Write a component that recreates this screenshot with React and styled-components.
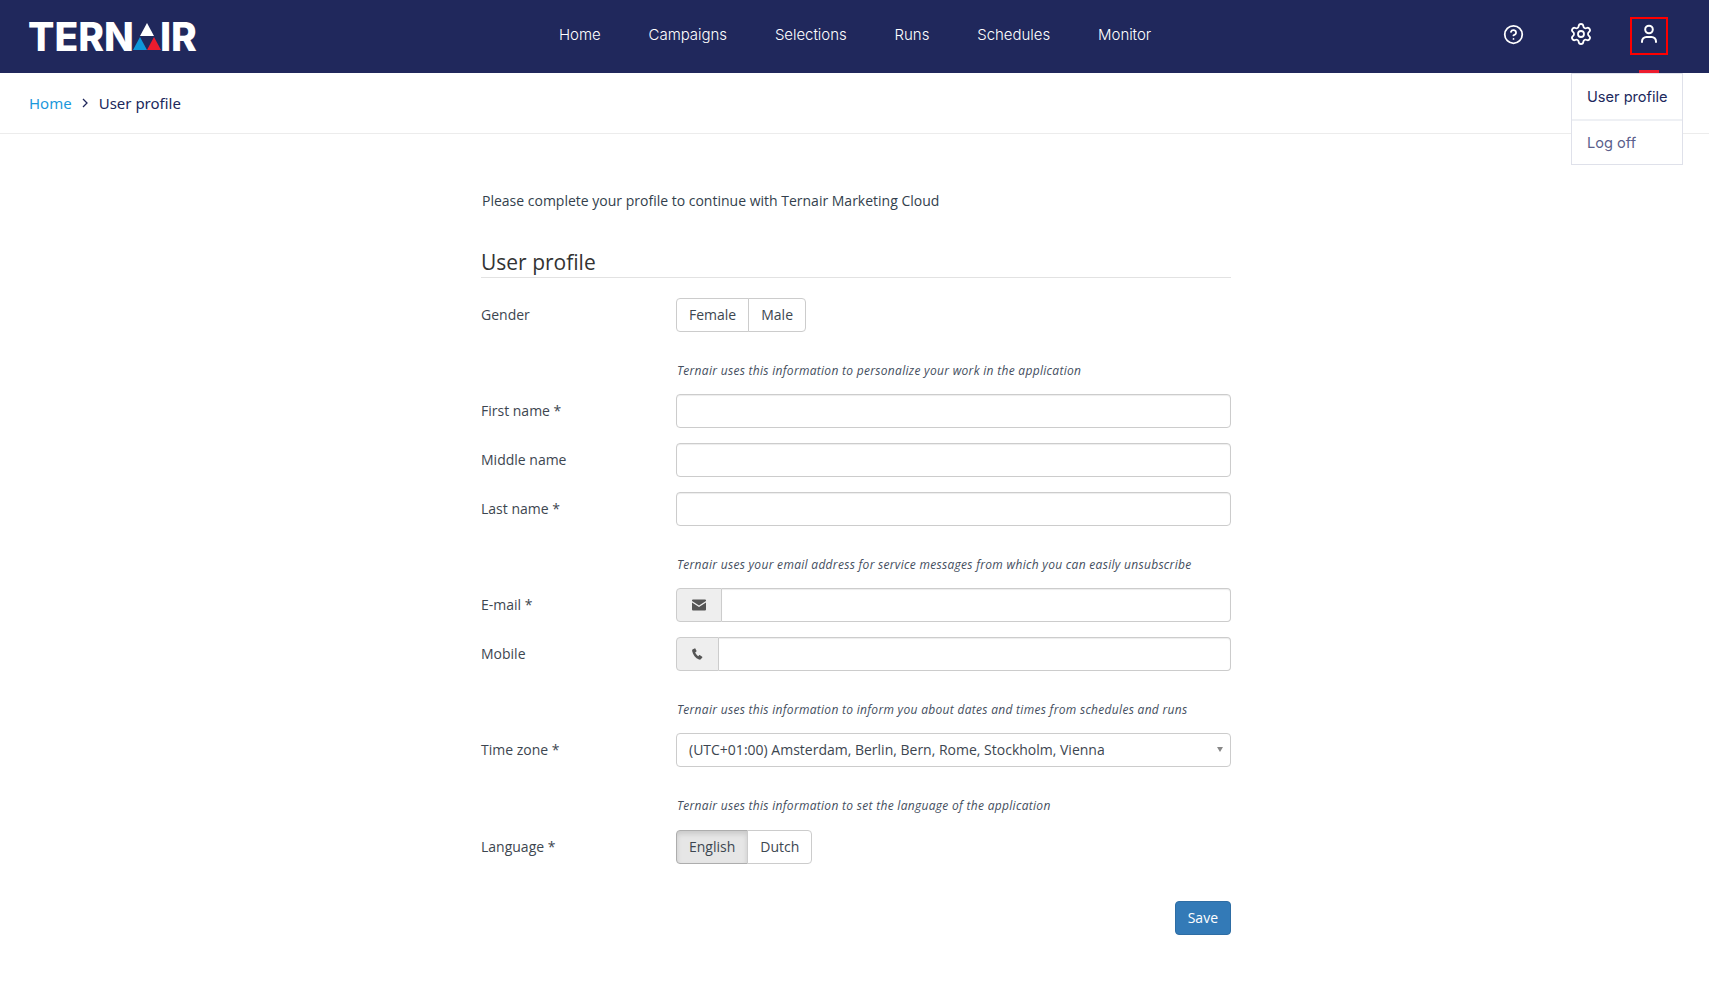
import React from 'react';
import styled, { createGlobalStyle } from 'styled-components';
import { CircleHelp, Settings } from 'lucide-react';

const GlobalStyle = createGlobalStyle`
  html, body {
    margin: 0;
    padding: 0;
    background: #fff;
  }
  body {
    font-family: "Open Sans", "Liberation Sans", sans-serif;
    font-size: 14px;
    color: #333;
  }
  * {
    box-sizing: border-box;
  }
`;

const TopBar = styled.header`
  height: 73px;
  background: #20285c;
  display: flex;
  align-items: center;
  position: relative;
  padding: 0 41px 0 28px;
`;

const Logo = styled.div`
  width: 169px;
  display: flex;
  align-items: center;
  color: #fff;
  font-family: Inter, "Liberation Sans", sans-serif;
  font-weight: 800;
  font-size: 39px;
  line-height: 1;
  user-select: none;
`;

const LogoMark = styled.svg`
  width: 28px;
  height: 28px;
  margin: 0 -1px 0 -1px;
  flex: none;
`;

const Nav = styled.nav`
  display: flex;
  gap: 48px;
  margin-left: 362px;
  margin-top: -5px;
`;

const NavLink = styled.a`
  color: #fff;
  font-family: Inter, "Liberation Sans", sans-serif;
  font-size: 15px;
  font-weight: 300;
  letter-spacing: -0.05px;
  text-decoration: none;
`;

const IconBar = styled.div`
  margin-left: auto;
  display: flex;
  align-items: center;
  gap: 30px;
`;

const IconButton = styled.button`
  width: 38px;
  height: 38px;
  margin-top: -2px;
  padding: 0 0 3px;
  display: flex;
  align-items: center;
  justify-content: center;
  background: none;
  color: #fff;
  border: 2px solid ${(p) => (p.$focused ? '#f00' : 'transparent')};
`;

const ActiveMark = styled.span`
  position: absolute;
  right: 50px;
  bottom: 0;
  width: 20px;
  height: 3px;
  background: #ed1c2e;
`;

const Crumbs = styled.div`
  height: 61px;
  padding: 0 29px;
  display: flex;
  align-items: center;
  gap: 9px;
  border-bottom: 1px solid #ececec;
  font-family: "Noto Sans", "Open Sans", sans-serif;
  font-size: 15px;
  color: #20285c;
`;

const CrumbLink = styled.a`
  color: #1b98dc;
  text-decoration: none;
`;

const CrumbArrow = styled.svg`
  width: 8px;
  height: 10px;
  margin-right: 1px;
  fill: none;
  stroke: #20285c;
  stroke-width: 1.3;
`;

const Menu = styled.div`
  position: absolute;
  top: 73px;
  right: 26px;
  width: 112px;
  background: #fff;
  border: 1px solid #dfe1ea;
  font-family: Inter, "Liberation Sans", sans-serif;
  font-size: 14.6px;
`;

const MenuItem = styled.div`
  height: ${(p) => p.$height}px;
  padding-left: 15px;
  display: flex;
  align-items: center;
  color: ${(p) => (p.$muted ? '#5b5f8c' : '#20285c')};
  border-top: ${(p) => (p.$muted ? '2px solid #eef0f4' : 'none')};
`;

const Main = styled.main`
  width: 750px;
  margin: 0 auto;
  position: relative;
  left: 1.5px;
  padding-top: 57px;
`;

const Intro = styled.p`
  margin: 0 0 0 1px;
  font-size: 14px;
  line-height: 20px;
  color: #333f4d;
`;

const Title = styled.h2`
  margin: 36px 0 20px;
  font-size: 21px;
  font-weight: 400;
  line-height: 30px;
  color: #333;
  border-bottom: 1px solid #e2e2e2;
`;

const Row = styled.div`
  display: grid;
  grid-template-columns: 195px 1fr;
  align-items: center;
  margin-bottom: 15px;
`;

const Label = styled.label`
  padding-bottom: 2px;
  color: #3d4650;
`;

const Help = styled.p`
  margin: 30px 0 ${(p) => p.$bottom || 15}px 196px;
  font-size: 12px;
  line-height: 17px;
  font-style: italic;
  letter-spacing: 0.3px;
  color: #444e5e;
`;

const Input = styled.input`
  display: block;
  width: 100%;
  height: 34px;
  padding: 6px 12px;
  background: #fff;
  border: 1px solid #ccc;
  border-radius: 4px;
  box-shadow: inset 0 1px 1px rgba(0, 0, 0, 0.075);
  font: inherit;
`;

const InputGroup = styled.div`
  display: flex;
  height: 34px;

  ${Input} {
    flex: 1;
    border-radius: 0 4px 4px 0;
    border-left: none;
  }
`;

const Addon = styled.span`
  width: ${(p) => p.$width}px;
  flex: none;
  display: flex;
  align-items: center;
  justify-content: center;
  background: #eee;
  border: 1px solid #ccc;
  border-radius: 4px 0 0 4px;
  color: #555;
`;

const SelectBox = styled.div`
  height: 34px;
  padding: 0 12px 2px;
  display: flex;
  align-items: center;
  justify-content: space-between;
  background: #fff;
  border: 1px solid #ccc;
  border-radius: 4px;
  color: #3d4650;
`;

const Caret = styled.span`
  width: 0;
  height: 0;
  margin-right: -5px;
  border-left: 3px solid transparent;
  border-right: 3px solid transparent;
  border-top: 5px solid #888;
`;

const ButtonGroup = styled.div`
  display: inline-flex;
  justify-self: start;
`;

const ToggleButton = styled.button`
  height: 34px;
  padding: 0 12px 2px;
  background: ${(p) => (p.$active ? '#e6e6e6' : '#fff')};
  border: 1px solid ${(p) => (p.$active ? '#adadad' : '#ccc')};
  box-shadow: ${(p) => (p.$active ? 'inset 0 3px 5px rgba(0, 0, 0, 0.125)' : 'none')};
  color: #3d4650;
  font: inherit;

  &:first-child {
    border-radius: 4px 0 0 4px;
  }
  &:last-child {
    margin-left: -1px;
    border-radius: 0 4px 4px 0;
  }
`;

const Actions = styled.div`
  display: flex;
  justify-content: flex-end;
  margin-top: 37px;
`;

const SaveButton = styled.button`
  height: 34px;
  padding: 0 12px 2px;
  background: #337ab7;
  border: 1px solid #2e6da4;
  border-radius: 4px;
  color: #fff;
  font: inherit;
`;

const navItems = ['Home', 'Campaigns', 'Selections', 'Runs', 'Schedules', 'Monitor'];

const MailIcon = () => (
  <svg width="14" height="12" viewBox="0 0 14 12" fill="currentColor">
    <path d="M1 0.5h12a1 1 0 0 1 1 1v.6L7 6.4 0 2.1v-.6a1 1 0 0 1 1-1z" />
    <path d="M0 3.6l7 4.3 7-4.3v6.9a1 1 0 0 1-1 1H1a1 1 0 0 1-1-1z" />
  </svg>
);

const PhoneIcon = () => (
  <svg width="11" height="12" viewBox="0 0 11 12" fill="currentColor">
    <path d="M2.6 0.4L.9 1.2C.2 1.6 0 2.4.2 3.2c.7 3.6 3.3 6.8 6.8 8.3.8.3 1.5.2 2-.4l1.3-1.5c.3-.3.2-.7-.1-.9L8 7.2c-.3-.2-.7-.2-.9.1l-.8.9C5 7.4 3.7 5.8 3.2 4.3l1-.6c.3-.2.4-.5.3-.9L3.4.7C3.3.4 2.9.2 2.6.4z" />
  </svg>
);

const UserIcon = () => (
  <svg width="20" height="20" viewBox="0 0 20 20" fill="none" stroke="currentColor" strokeWidth="2" strokeLinecap="round">
    <circle cx="10" cy="5.5" r="3.8" />
    <path d="M3 18v-.6a4.4 4.4 0 0 1 4.4-4.4h5.2a4.4 4.4 0 0 1 4.4 4.4v.6" />
  </svg>
);

const Field = ({ label }) => (
  <Row>
    <Label>{label}</Label>
    <Input />
  </Row>
);

const App = () => {
  return (
    <div>
      <GlobalStyle />
      <TopBar>
        <Logo>
          TERN
          <LogoMark viewBox="0 0 28 28">
            <polygon points="14,0 21,13 7,13" fill="#fff" />
            <polygon points="7,14 14,27 0,27" fill="#0e97d9" />
            <polygon points="21,14 28,27 14,27" fill="#ed1c2e" />
          </LogoMark>
          IR
        </Logo>
        <Nav>
          {navItems.map((v) => (
            <NavLink key={v}>{v}</NavLink>
          ))}
        </Nav>
        <IconBar>
          <IconButton>
            <CircleHelp size={21} strokeWidth={2} />
          </IconButton>
          <IconButton>
            <Settings size={24} strokeWidth={1.8} />
          </IconButton>
          <IconButton $focused>
            <UserIcon />
          </IconButton>
        </IconBar>
        <ActiveMark />
      </TopBar>
      <Menu>
        <MenuItem $height={45}>User profile</MenuItem>
        <MenuItem $height={45} $muted>Log off</MenuItem>
      </Menu>
      <Crumbs>
        <CrumbLink>Home</CrumbLink>
        <CrumbArrow viewBox="0 0 8 10">
          <path d="M2 1l4 4-4 4" />
        </CrumbArrow>
        <span>User profile</span>
      </Crumbs>
      <Main>
        <Intro>Please complete your profile to continue with Ternair Marketing Cloud</Intro>
        <Title>User profile</Title>
        <Row>
          <Label>Gender</Label>
          <ButtonGroup>
            <ToggleButton>Female</ToggleButton>
            <ToggleButton>Male</ToggleButton>
          </ButtonGroup>
        </Row>
        <Help>Ternair uses this information to personalize your work in the application</Help>
        <Field label="First name *" />
        <Field label="Middle name" />
        <Field label="Last name *" />
        <Help>Ternair uses your email address for service messages from which you can easily unsubscribe</Help>
        <Row>
          <Label>E-mail *</Label>
          <InputGroup>
            <Addon $width={46}>
              <MailIcon />
            </Addon>
            <Input />
          </InputGroup>
        </Row>
        <Row>
          <Label>Mobile</Label>
          <InputGroup>
            <Addon $width={43}>
              <PhoneIcon />
            </Addon>
            <Input />
          </InputGroup>
        </Row>
        <Help>Ternair uses this information to inform you about dates and times from schedules and runs</Help>
        <Row>
          <Label>Time zone *</Label>
          <SelectBox>
            (UTC+01:00) Amsterdam, Berlin, Bern, Rome, Stockholm, Vienna
            <Caret />
          </SelectBox>
        </Row>
        <Help $bottom={16}>Ternair uses this information to set the language of the application</Help>
        <Row>
          <Label>Language *</Label>
          <ButtonGroup>
            <ToggleButton $active>English</ToggleButton>
            <ToggleButton>Dutch</ToggleButton>
          </ButtonGroup>
        </Row>
        <Actions>
          <SaveButton>Save</SaveButton>
        </Actions>
      </Main>
    </div>
  );
};

export default App;
